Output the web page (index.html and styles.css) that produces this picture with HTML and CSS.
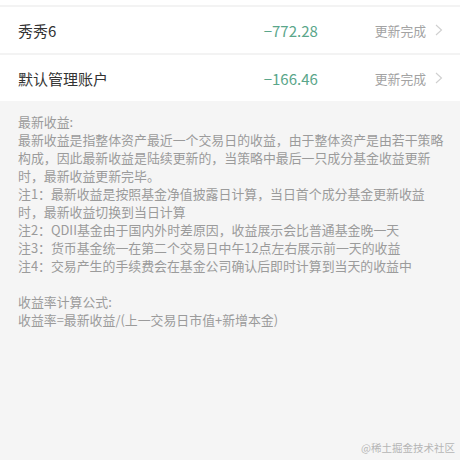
FILE: index.html
```html
<!DOCTYPE html>
<html lang="zh">
<head>
    <meta charset="UTF-8">
    <meta name="viewport" content="width=device-width, initial-scale=1.0">
    <title>收益明细</title>
    <link rel="stylesheet" href="styles.css">
</head>
<body>
    <div class="page">
        <div class="account-list">
            <div class="account-row">
                <span class="account-name">秀秀6</span>
                <span class="account-amount">−772.28</span>
                <span class="account-status">更新完成</span>
                <svg class="chevron" width="8" height="12" viewBox="0 0 8 12">
                    <path d="M1 1 L6.5 6 L1 11" fill="none" stroke="#cfcfcf" stroke-width="1.1"/>
                </svg>
            </div>
            <div class="account-row">
                <span class="account-name">默认管理账户</span>
                <span class="account-amount">−166.46</span>
                <span class="account-status">更新完成</span>
                <svg class="chevron" width="8" height="12" viewBox="0 0 8 12">
                    <path d="M1 1 L6.5 6 L1 11" fill="none" stroke="#cfcfcf" stroke-width="1.1"/>
                </svg>
            </div>
        </div>

        <div class="notes">
            <p>最新收益:</p>
            <p>最新收益是指整体资产最近一个交易日的收益，由于整体资产是由若干策略构成，因此最新收益是陆续更新的，当策略中最后一只成分基金收益更新时，最新收益更新完毕。</p>
            <p>注1：最新收益是按照基金净值披露日计算，当日首个成分基金更新收益时，最新收益切换到当日计算</p>
            <p>注2：QDII基金由于国内外时差原因，收益展示会比普通基金晚一天</p>
            <p>注3：货币基金统一在第二个交易日中午12点左右展示前一天的收益</p>
            <p>注4：交易产生的手续费会在基金公司确认后即时计算到当天的收益中</p>
            <p class="gap"></p>
            <p>收益率计算公式:</p>
            <p>收益率=最新收益/(上一交易日市值+新增本金)</p>
        </div>

        <div class="watermark">@稀土掘金技术社区</div>
    </div>
</body>
</html>
```

FILE: styles.css
```css
body {
    margin: 0;
    font-family: "Noto Sans CJK SC", "Noto Sans", sans-serif;
    background-color: #f5f5f5;
}

.page {
    position: relative;
    width: 460px;
    height: 460px;
    overflow: hidden;
    background-color: #f5f5f5;
}

.account-list {
    background-color: #fff;
    padding-top: 5px;
}

.account-row {
    display: flex;
    align-items: center;
    height: 46px;
    padding: 0 17px 0 18px;
    border-top: 2px solid #f3f3f3;
    background-color: #fff;
}

.account-name {
    flex: 1;
    font-size: 15px;
    color: #333;
}

.account-amount {
    font-size: 15px;
    color: #5aa68a;
}

.account-status {
    margin-left: 57px;
    font-size: 12.8px;
    color: #a3a3a3;
}

.chevron {
    margin-left: 9px;
}

.notes {
    padding: 12px 12px 0 18px;
    font-size: 12.9px;
    line-height: 18px;
    color: #9b9b9b;
}

.notes p {
    margin: 0;
}

.notes .gap {
    height: 18px;
}

.watermark {
    position: absolute;
    right: 5px;
    bottom: 5px;
    font-size: 10.5px;
    color: #b5b5b5;
    font-family: "Noto Sans CJK SC", serif;
}
```
